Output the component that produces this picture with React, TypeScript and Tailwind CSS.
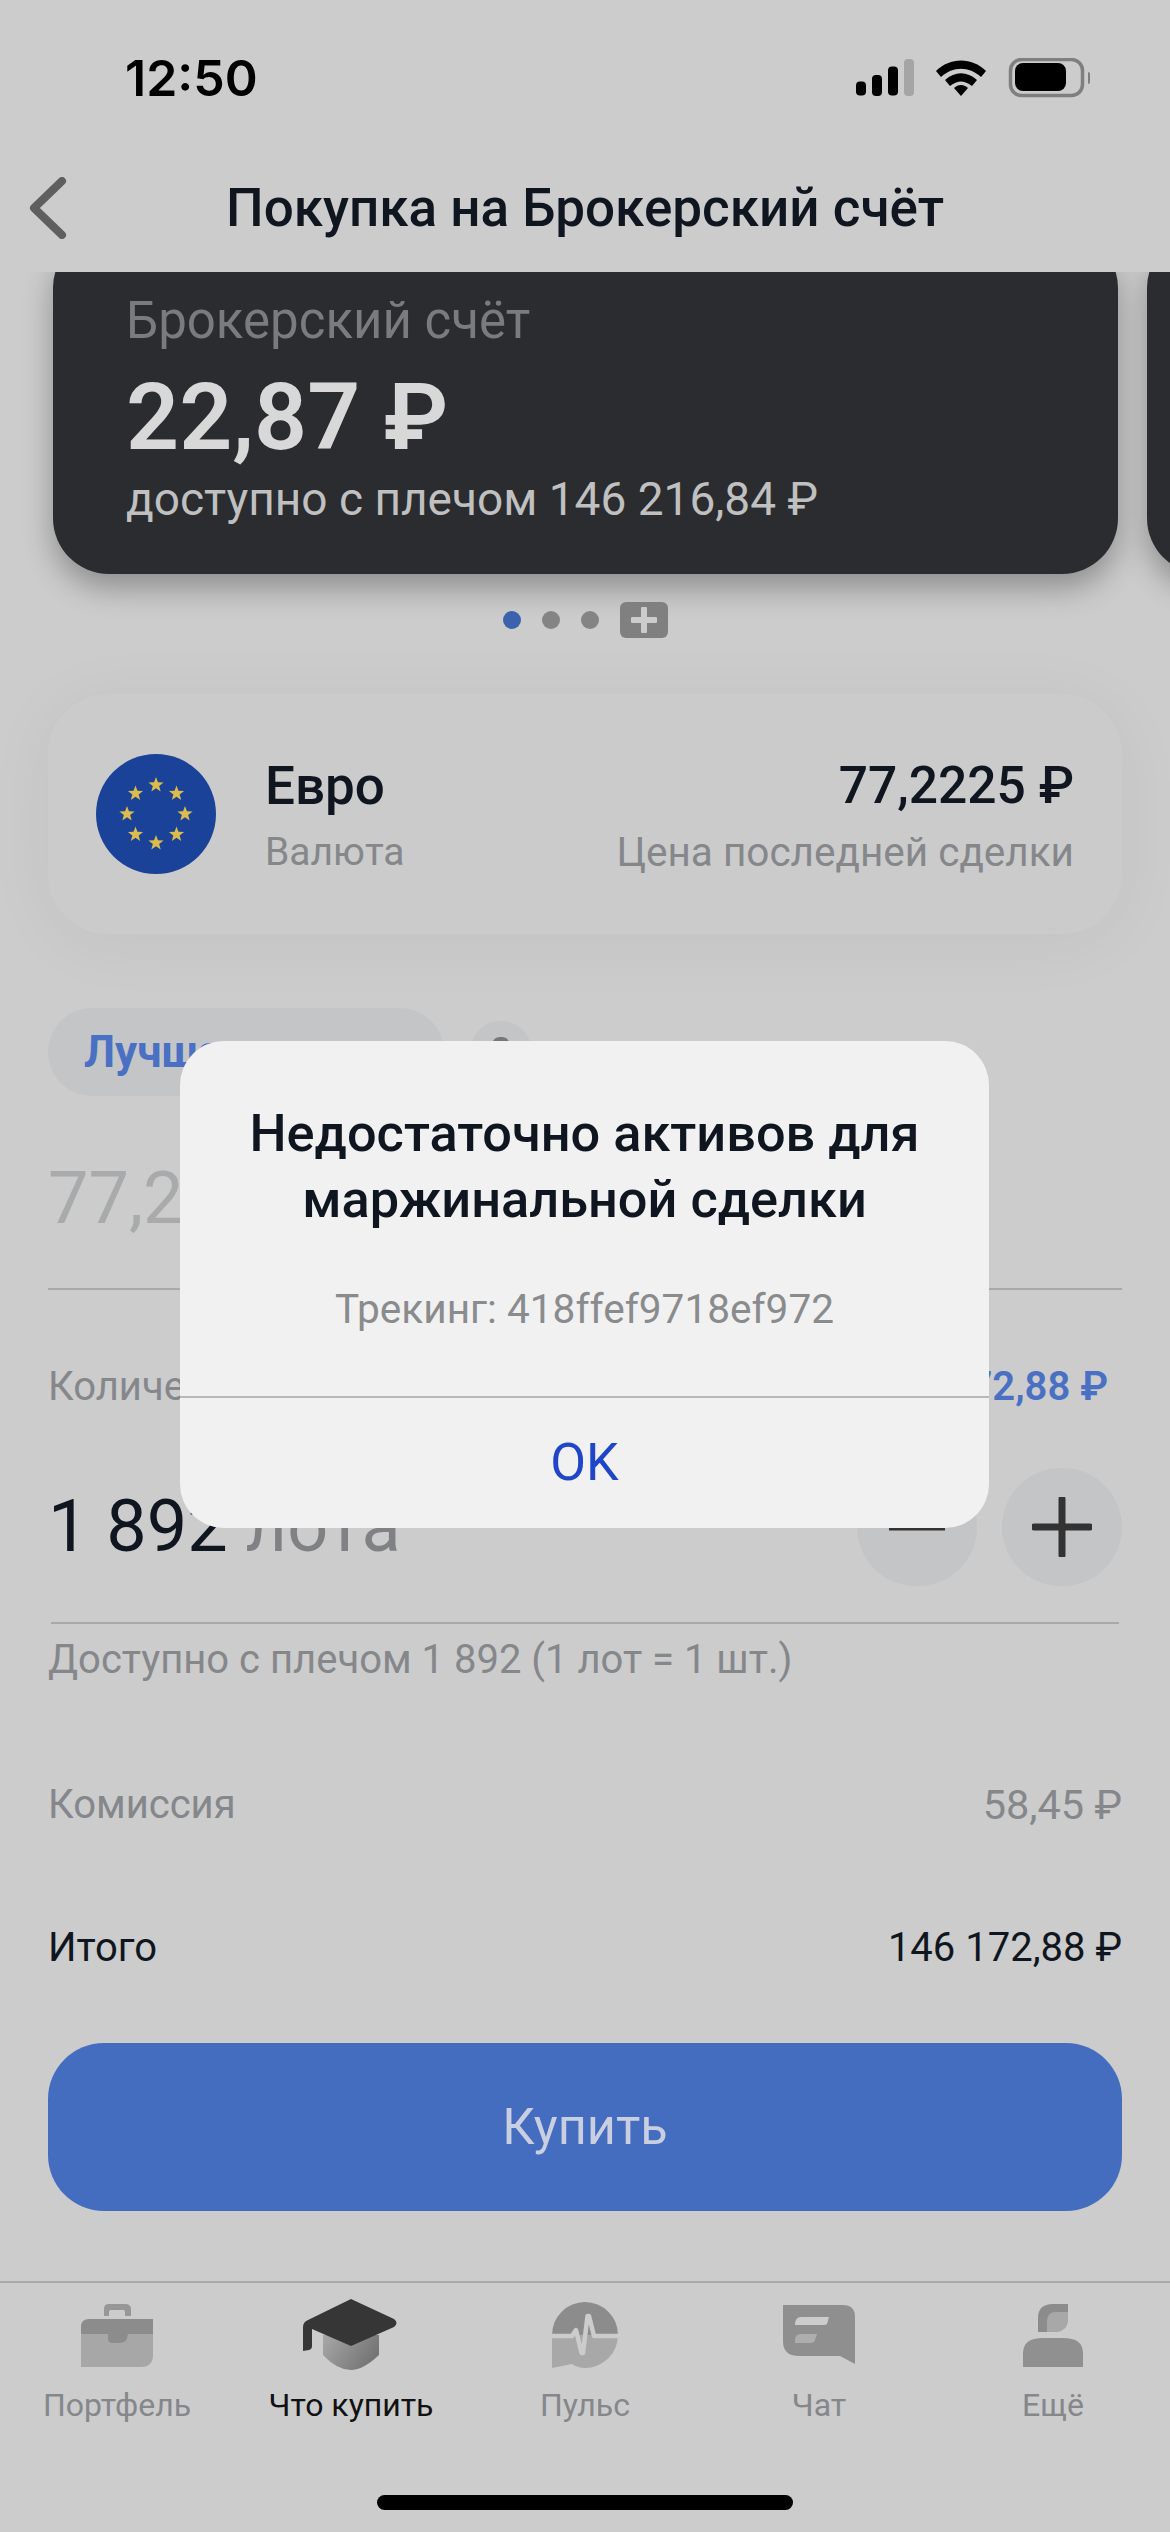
import React from "react";

const stars = [0, 1, 2, 3, 4, 5, 6, 7].map((i) => {
  const a = (i * Math.PI) / 4;
  return [60 + 29 * Math.sin(a), 60 - 29 * Math.cos(a)];
});

function starPath(cx: number, cy: number, R = 8, r = 3.3) {
  const pts: string[] = [];
  for (let i = 0; i < 10; i++) {
    const rad = i % 2 === 0 ? R : r;
    const a = (i * Math.PI) / 5;
    pts.push(`${cx + rad * Math.sin(a)},${cy - rad * Math.cos(a)}`);
  }
  return pts.join(" ");
}

function Euro() {
  return (
    <svg width="120" height="120" viewBox="0 0 120 120" className="shrink-0">
      <circle cx="60" cy="60" r="60" fill="#1a4298" />
      {stars.map(([x, y], i) => (
        <polygon key={i} points={starPath(x, y)} fill="#dcbc4c" />
      ))}
    </svg>
  );
}

function StatusIcons() {
  return (
    <svg width="240" height="40" viewBox="0 0 240 40" className="shrink-0">
      <rect x="6" y="23.5" width="10" height="14" rx="4" fill="#000" />
      <rect x="22" y="17" width="10" height="21" rx="4" fill="#000" />
      <rect x="38" y="8.5" width="10" height="29" rx="4" fill="#000" />
      <rect x="54" y="1" width="10" height="37" rx="4" fill="#a5a5a5" />
      <path d="M86 13 C100 -1 122 -1 136 13 L131 19 C119 8 103 8 91 19 Z" fill="#000" />
      <path d="M95 22 C105 13 117 13 127 22 L122 28 C114 22 108 22 100 28 Z" fill="#000" />
      <path d="M104 30 C108 26 114 26 118 30 L111 38 Z" fill="#000" />
      <rect x="160.5" y="1.5" width="72" height="36" rx="11" fill="none" stroke="#7f7f7f" strokeWidth="3.5" />
      <rect x="165" y="5" width="51" height="28" rx="8" fill="#000" />
      <path d="M238 14 C241 15 243 17 243 20 C243 23 241 25 238 26 Z" fill="#7f7f7f" />
    </svg>
  );
}

function Briefcase() {
  return (
    <svg width="72" height="64" viewBox="0 0 72 64">
      <path d="M23 13 V6 Q23 1 28 1 H44 Q50 1 50 6 V13 H44 V9 Q44 7 42 7 H30 Q28 7 28 9 V13 Z" fill="#979797" />
      <path d="M0 31 V24 Q0 16 8 16 H72 V31 Z" fill="#8c8c8c" />
      <path d="M0 31 H27 V36 Q27 40 31 40 H39 Q47 40 47 31 H72 V52 Q72 64 60 64 H0 Z" fill="#a7a7a7" />
      <path d="M27 31 H47 Q47 40 39 40 H31 Q27 40 27 36 Z" fill="#8c8c8c" />
    </svg>
  );
}

function Hat() {
  return (
    <svg width="96" height="72" viewBox="0 0 96 72">
      <defs>
        <linearGradient id="capg" x1="0" y1="0" x2="1" y2="0.4">
          <stop offset="0" stopColor="#a8a8a8" />
          <stop offset="1" stopColor="#757575" />
        </linearGradient>
      </defs>
      <path d="M20 36 H76 V56 Q60 71 48 71 Q34 71 20 56 Z" fill="url(#capg)" />
      <path d="M48 0 L91 20 Q96 24 91 28 L48 47 L9 30 V47 Q9 50 6 51 L0 52 V28 Q0 23 5 21 Z" fill="#363636" />
    </svg>
  );
}

function Pulse() {
  return (
    <svg width="66" height="66" viewBox="0 0 66 66">
      <path d="M0 33 A33 33 0 0 1 66 33 Z" fill="#8c8c8c" />
      <path d="M0 33 H66 A33 33 0 0 1 33 66 Q26 66 20 62 L0 66 Z" fill="#a8a8a8" />
      <path
        d="M0 34 H20 L24 28 L29.5 51 H31 L35.5 14 H37 L42 34 H66"
        fill="none"
        stroke="#cccccc"
        strokeWidth="4.5"
        strokeLinejoin="round"
      />
    </svg>
  );
}

function Chat() {
  return (
    <svg width="72" height="60" viewBox="0 0 72 60">
      <path d="M0 0 H60 Q72 0 72 12 V59 L57 51 H16 Q0 51 0 36 Z" fill="#8f8f8f" />
      <path d="M18 12 H46 L44 19 Q43 20 41 20 H12 Q12 12 18 12 Z" fill="#cccccc" />
      <path d="M18 29 H34 L32 35 Q31 38 29 38 H12 V35 Q12 29 18 29 Z" fill="#aeaeae" />
    </svg>
  );
}

function Person() {
  return (
    <svg width="60" height="64" viewBox="0 0 60 64">
      <path d="M15 29 V15 Q15 1 30 1 H45 V15 Q45 29 30 29 Z" fill="#8c8c8c" />
      <path d="M24 29 V18 Q24 9 33 9 H45 V15 Q45 29 30 29 Z" fill="#a8a8a8" />
      <path d="M0 64 V50 Q0 35 20 35 H40 Q60 35 60 50 V64 Z" fill="#909090" />
    </svg>
  );
}

const tabs: [string, React.ReactNode, boolean][] = [
  ["Портфель", <Briefcase />, false],
  ["Что купить", <Hat />, true],
  ["Пульс", <Pulse />, false],
  ["Чат", <Chat />, false],
  ["Ещё", <Person />, false],
];

export default function App() {
  return (
    <div className="relative flex h-[2532px] w-[1170px] flex-col overflow-hidden bg-[#cccccc] font-[family-name:Roboto,sans-serif] text-[#0f1620]">
      <div className="flex h-[156px] shrink-0 items-center justify-between pl-[125px] pr-[80px]">
        <span className="font-[family-name:Inter,sans-serif] text-[50px] font-semibold text-black">12:50</span>
        <StatusIcons />
      </div>

      <div className="grid h-[116px] shrink-0 grid-cols-[1fr_auto_1fr] pb-[12px]">
        <div className="flex items-center pl-[28px]">
          <svg width="40" height="62" viewBox="0 0 40 62" fill="none">
            <path d="M34 4 L6 31 L34 58" stroke="#5f5f5f" strokeWidth="8" strokeLinecap="round" strokeLinejoin="round" />
          </svg>
        </div>
        <div className="flex items-center text-[53px] font-medium leading-none">Покупка на Брокерский счёт</div>
        <div />
      </div>

      <div className="h-[378px] shrink-0 overflow-hidden">
        <div className="-mt-[40px] flex gap-[29px] pl-[53px]">
          <div className="h-[342px] w-[1065px] shrink-0 rounded-[56px] bg-[#2a2c30] pl-[73px] pt-[59px] shadow-[0_14px_30px_rgba(0,0,0,0.3)]">
            <div className="text-[51px] leading-[60px] text-[#7a7b7e]">Брокерский счёт</div>
            <div className="mt-[17px] text-[93px] font-semibold leading-[100px] text-[#d8d8d8]">22,87 ₽</div>
            <div className="mt-[6px] text-[46px] leading-[50px] text-[#c0c0c0]">доступно с плечом 146 216,84 ₽</div>
          </div>
          <div className="h-[342px] w-[1065px] shrink-0 rounded-[56px] bg-[#2a2c30] shadow-[0_14px_30px_rgba(0,0,0,0.3)]" />
        </div>
        <div className="mt-[28px] flex items-center pl-[503px]">
          <span className="h-[18px] w-[18px] rounded-full bg-[#3d62ad]" />
          <span className="ml-[21px] h-[18px] w-[18px] rounded-full bg-[#848484]" />
          <span className="ml-[21px] h-[18px] w-[18px] rounded-full bg-[#848484]" />
          <span className="ml-[21px] flex h-[36px] w-[48px] items-center justify-center rounded-[6px] bg-[#808080]">
            <svg width="26" height="26" viewBox="0 0 26 26">
              <path d="M13 2 V24 M2 13 H24" stroke="#cccccc" strokeWidth="6" strokeLinecap="round" />
            </svg>
          </span>
        </div>
      </div>

      <div className="mx-[48px] mt-[44px] flex h-[240px] shrink-0 items-center rounded-[60px] bg-[#cbcbcb] pl-[48px] pr-[48px] shadow-[0_8px_70px_rgba(0,0,0,0.05)]">
        <Euro />
        <div className="ml-[49px] pt-[5px]">
          <div className="text-[53px] font-medium leading-[60px]">Евро</div>
          <div className="mt-[11px] text-[39px] leading-[50px] text-[#85878b]">Валюта</div>
        </div>
        <div className="ml-auto pt-[5px] text-right">
          <div className="text-[51.5px] font-medium leading-[60px]">77,2225 ₽</div>
          <div className="mt-[11px] text-[40.5px] leading-[50px] text-[#85878b]">Цена последней сделки</div>
        </div>
      </div>

      <div className="mt-[74px] flex shrink-0 items-center px-[48px]">
        <div className="flex h-[88px] w-[396px] items-center rounded-[44px] bg-[#c4c5c6] pl-[36px] text-[44px] font-bold text-[#4a70c4]">Лучшая цена</div>
        <div className="ml-[26px] flex h-[62px] w-[62px] items-center justify-center rounded-full bg-[#c4c5c6] text-[38px] font-bold text-[#777777]">?</div>
      </div>

      <div className="mt-[63px] shrink-0 px-[48px] text-[72px] leading-[80px] text-[#a9aaab]">77,2225 ₽</div>
      <div className="mx-[48px] mt-[49px] h-[2px] shrink-0 bg-[#a9a9a9]" />

      <div className="mt-[72px] flex shrink-0 items-center justify-between pl-[48px] pr-[62px] text-[40px] leading-[50px]">
        <span className="text-[#85878b]">Количество</span>
        <span className="font-semibold text-[#4a70c4]">146 172,88 ₽</span>
      </div>

      <div className="mt-[56px] flex shrink-0 items-center px-[48px]">
        <div className="text-[72px] font-[450] leading-[118px]">
          1 892 <span className="text-[#808185]">лота</span>
        </div>
        <div className="ml-auto flex gap-[25px]">
          <button className="flex h-[118px] w-[120px] items-center justify-center rounded-full bg-[#c4c5c6]">
            <svg width="60" height="60" viewBox="0 0 60 60"><path d="M2 30 H58" stroke="#333" strokeWidth="7" /></svg>
          </button>
          <button className="flex h-[118px] w-[120px] items-center justify-center rounded-full bg-[#c4c5c6]">
            <svg width="60" height="60" viewBox="0 0 60 60"><path d="M2 30 H58 M30 2 V58" stroke="#333" strokeWidth="7" strokeLinecap="round" /></svg>
          </button>
        </div>
      </div>
      <div className="mx-[51px] mt-[36px] h-[2px] shrink-0 bg-[#a9a9a9]" />
      <div className="mt-[11px] shrink-0 px-[48px] text-[40px] leading-[50px] text-[#85878b]">Доступно с плечом 1 892 (1 лот = 1 шт.)</div>

      <div className="mt-[95px] flex shrink-0 items-center justify-between px-[48px] text-[40px] leading-[50px] text-[#85878b]">
        <span>Комиссия</span>
        <span className="text-[41.5px]">58,45 ₽</span>
      </div>
      <div className="mt-[93px] flex shrink-0 justify-between px-[48px] text-[40px] leading-[50px]">
        <span>Итого</span>
        <span>146 172,88 ₽</span>
      </div>

      <button className="mx-[48px] mt-[70px] flex h-[168px] shrink-0 items-center justify-center rounded-[56px] bg-[#446cbf] text-[50.5px] text-[#c9cfe0]">Купить</button>

      <div className="mt-[70px] grid shrink-0 grid-cols-5 border-t-2 border-[#a9a9a9] pt-[16px]">
        {tabs.map(([label, icon, active]) => (
          <div key={label} className="flex flex-col items-center">
            <div className="flex h-[72px] items-center justify-center">{icon}</div>
            <div className={`mt-[14px] text-[32px] leading-[40px] ${active ? "text-[#111111]" : "text-[#85878b]"}`}>{label}</div>
          </div>
        ))}
      </div>

      <div className="mx-auto mt-[70px] h-[15px] w-[416px] shrink-0 rounded-full bg-black" />

      <div className="absolute left-[180px] top-[1041px] flex h-[487px] w-[809px] flex-col rounded-[44px] bg-[#f1f1f2]">
        <div className="flex h-[355px] flex-col items-center pt-[59px] text-center">
          <div className="text-[52.3px] font-medium leading-[66px]">Недостаточно активов для<br />маржинальной сделки</div>
          <div className="mt-[52px] text-[40.6px] leading-[50px] text-[#8a8b8d]">Трекинг: 418ffef9718ef972</div>
        </div>
        <div className="h-[2px] bg-[#b8b8b8]" />
        <div className="flex flex-1 items-center justify-center text-[52px] text-[#1f46c8]">OK</div>
      </div>
    </div>
  );
}
